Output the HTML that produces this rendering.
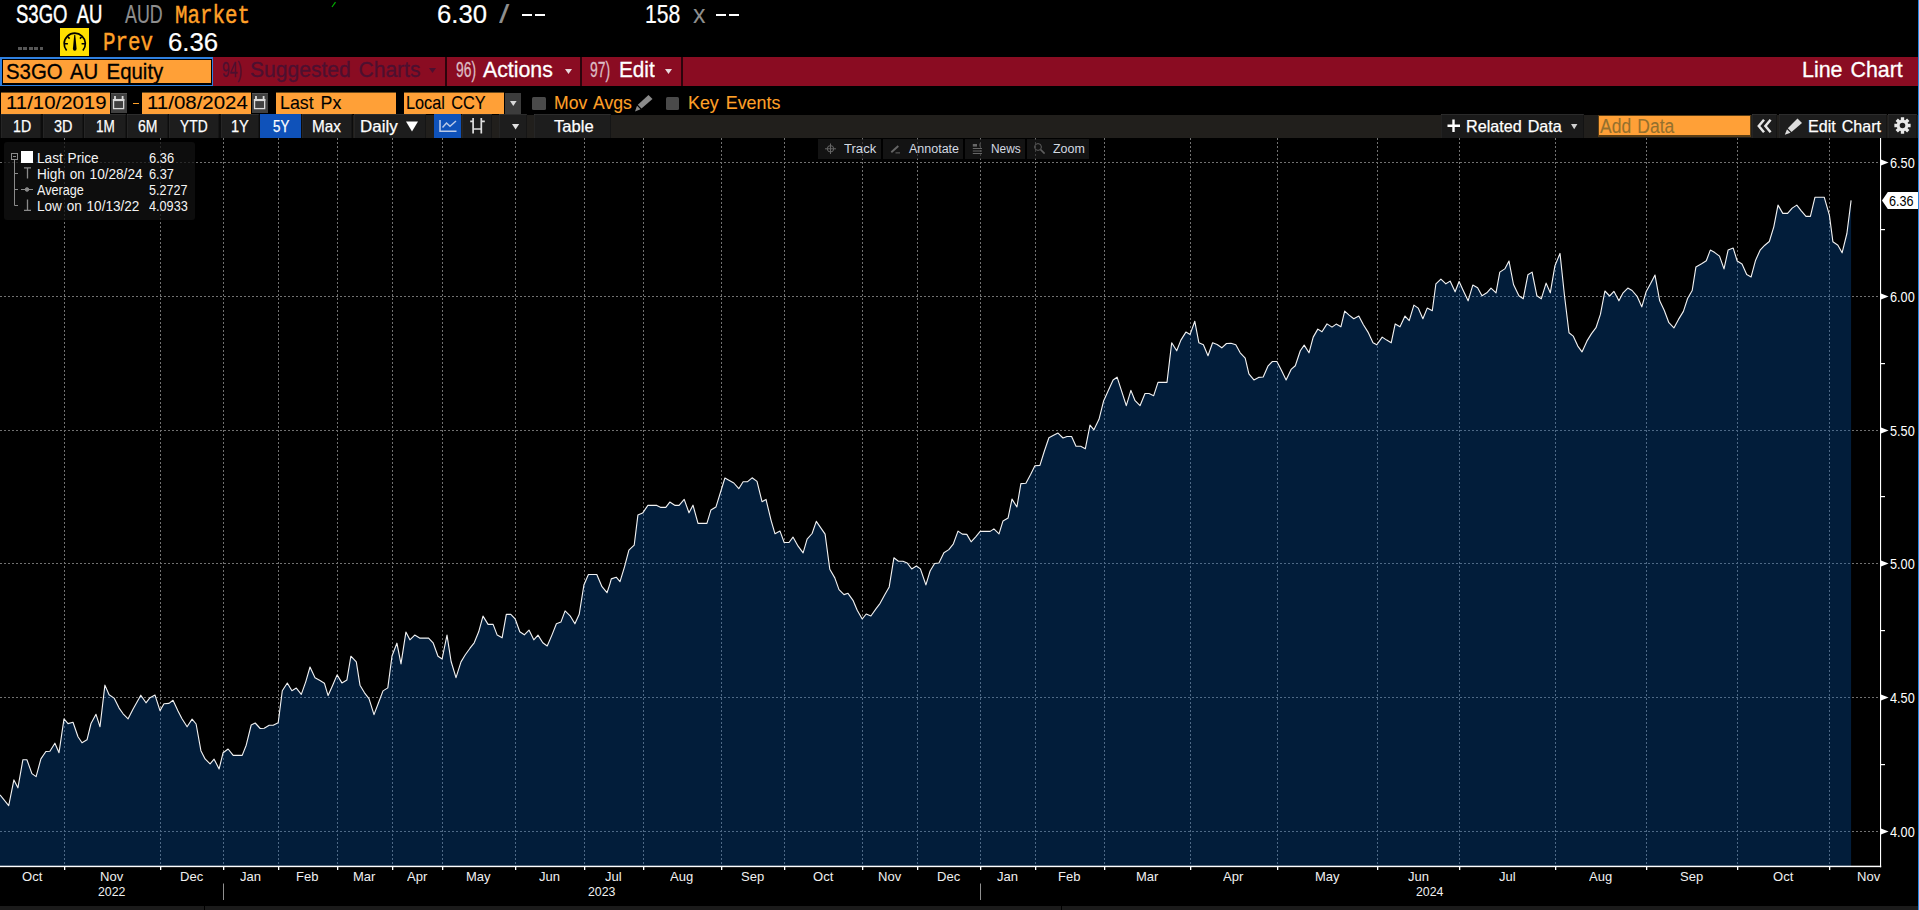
<!DOCTYPE html>
<html><head><meta charset="utf-8"><title>S3GO AU Equity - Line Chart</title>
<style>
html,body{margin:0;padding:0;background:#000;overflow:hidden;}
body{width:1919px;height:910px;position:relative;font-family:"Liberation Sans",sans-serif;}
.t{position:absolute;white-space:pre;line-height:1;transform-origin:0 0;display:block;}
.b{position:absolute;}
.s{position:absolute;overflow:visible;}
</style></head><body>
<span class="t" style="left:16.30px;top:2.04px;font-size:25px;color:#ffffff;-webkit-text-stroke:0.45px #ffffff;transform:scaleX(0.7400);word-spacing:7px;">S3GO AU</span>
<span class="t" style="left:124.70px;top:2.04px;font-size:25px;color:#8e8e8e;-webkit-text-stroke:0.2px #8e8e8e;transform:scaleX(0.7128);">AUD</span>
<span class="t" style="left:175.00px;top:2.89px;font-size:26.5px;color:#ffa028;-webkit-text-stroke:0.45px #ffa028;transform:scaleX(0.7864);font-family:'Liberation Mono',monospace;">Market</span>
<span class="t" style="left:436.50px;top:2.04px;font-size:25px;color:#ffffff;-webkit-text-stroke:0.2px #ffffff;transform:scaleX(1.0283);">6.30</span>
<span class="t" style="left:499.00px;top:2.04px;font-size:25px;color:#8e8e8e;transform:scaleX(1.4857);">/</span>
<div class="b" style="left:522px;top:14px;width:10px;height:2px;background:#ffffff;"></div>
<div class="b" style="left:535px;top:14px;width:10px;height:2px;background:#ffffff;"></div>
<span class="t" style="left:644.90px;top:2.04px;font-size:25px;color:#ffffff;-webkit-text-stroke:0.2px #ffffff;transform:scaleX(0.8479);">158</span>
<span class="t" style="left:692.90px;top:2.04px;font-size:25px;color:#8e8e8e;transform:scaleX(1.0000);">x</span>
<div class="b" style="left:716px;top:14px;width:10px;height:2px;background:#ffffff;"></div>
<div class="b" style="left:729px;top:14px;width:10px;height:2px;background:#ffffff;"></div>
<svg class="s" style="left:330px;top:1px" width="8" height="8"><path d="M2 6 L5.5 1.2" stroke="#00b000" stroke-width="1.2" fill="none"/></svg>
<div class="b" style="left:18.0px;top:46.6px;width:3.8999999999999986px;height:3.799999999999997px;background:#565656;"></div>
<div class="b" style="left:23.4px;top:46.6px;width:3.8999999999999986px;height:3.799999999999997px;background:#565656;"></div>
<div class="b" style="left:28.8px;top:46.6px;width:3.900000000000002px;height:3.799999999999997px;background:#565656;"></div>
<div class="b" style="left:34.2px;top:46.6px;width:3.8999999999999986px;height:3.799999999999997px;background:#565656;"></div>
<div class="b" style="left:39.6px;top:46.6px;width:3.8999999999999986px;height:3.799999999999997px;background:#565656;"></div>
<div class="b" style="left:60px;top:28px;width:29px;height:28px;background:#ffe000;"></div>
<svg class="s" style="left:60px;top:28px" width="29" height="28" viewBox="0 0 29 28">
<path d="M6.63 22.56 A10.6 10.6 0 1 1 22.87 22.56" fill="none" stroke="#000" stroke-width="1.7"/>
<path d="M12.9 20.8 Q12.9 22.7 14.75 22.7 Q16.6 22.7 16.6 20.8 L15.25 6.8 L14.25 6.8 Z" fill="#000"/>
<path d="M4.6 15.7 H7.9 M21.6 15.7 H24.9 M7.9 8.9 L9.6 10.6 M21.6 8.9 L19.9 10.6" stroke="#000" stroke-width="1.5" fill="none"/>
</svg>
<span class="t" style="left:103.40px;top:30.39px;font-size:26.5px;color:#ffa028;-webkit-text-stroke:0.45px #ffa028;transform:scaleX(0.7874);font-family:'Liberation Mono',monospace;">Prev</span>
<span class="t" style="left:167.90px;top:29.54px;font-size:25px;color:#ffffff;-webkit-text-stroke:0.2px #ffffff;transform:scaleX(1.0303);">6.36</span>
<div class="b" style="left:0px;top:57px;width:1918px;height:28.599999999999994px;background:#8a0c22;"></div>
<div class="b" style="left:0px;top:57px;width:213px;height:29px;background:#2f80e0;"></div>
<div class="b" style="left:1.5px;top:58.5px;width:210.0px;height:26.0px;background:#000;"></div>
<div class="b" style="left:2.5px;top:60px;width:208.0px;height:23px;background:#ffa037;"></div>
<span class="t" style="left:5.60px;top:60.55px;font-size:22.5px;color:#000;-webkit-text-stroke:0.3px #000;transform:scaleX(0.9060);word-spacing:3px;">S3GO AU Equity</span>
<span class="t" style="left:222.00px;top:59.38px;font-size:22px;color:#4d1030;-webkit-text-stroke:0.3px #4d1030;transform:scaleX(0.6299);">94)</span>
<span class="t" style="left:250.00px;top:59.38px;font-size:22px;color:#4d1030;-webkit-text-stroke:0.3px #4d1030;transform:scaleX(0.9572);word-spacing:2px;">Suggested Charts</span>
<svg class="s" style="left:429px;top:68px" width="8" height="6"><path d="M0 0 H7 L3.5 5 Z" fill="#4d1030"/></svg>
<div class="b" style="left:445px;top:57px;width:2px;height:29px;background:#2c040c;"></div>
<span class="t" style="left:455.70px;top:59.38px;font-size:22px;color:#dcbcc4;-webkit-text-stroke:0.3px #dcbcc4;transform:scaleX(0.6299);">96)</span>
<span class="t" style="left:483.30px;top:59.38px;font-size:22px;color:#ffffff;-webkit-text-stroke:0.3px #ffffff;transform:scaleX(0.9678);">Actions</span>
<svg class="s" style="left:564.5px;top:68.5px" width="8" height="6"><path d="M0 0 H7 L3.5 5 Z" fill="#e8d8dc"/></svg>
<div class="b" style="left:580px;top:57px;width:2px;height:29px;background:#2c040c;"></div>
<span class="t" style="left:590.20px;top:59.38px;font-size:22px;color:#dcbcc4;-webkit-text-stroke:0.3px #dcbcc4;transform:scaleX(0.6331);">97)</span>
<span class="t" style="left:618.50px;top:59.38px;font-size:22px;color:#ffffff;-webkit-text-stroke:0.3px #ffffff;transform:scaleX(0.9426);">Edit</span>
<svg class="s" style="left:664.5px;top:68.5px" width="8" height="6"><path d="M0 0 H7 L3.5 5 Z" fill="#e8d8dc"/></svg>
<div class="b" style="left:681px;top:57px;width:2px;height:29px;background:#2c040c;"></div>
<span class="t" style="left:1802.40px;top:59.38px;font-size:22px;color:#ffffff;-webkit-text-stroke:0.3px #ffffff;transform:scaleX(0.9739);word-spacing:2px;">Line Chart</span>
<div class="b" style="left:1px;top:92px;width:109px;height:1px;background:#6b4a1c;"></div>
<div class="b" style="left:1px;top:93px;width:109px;height:20.5px;background:#ffa037;"></div>
<span class="t" style="left:6.30px;top:94.14px;font-size:18.5px;color:#000;-webkit-text-stroke:0.1px #000;transform:scaleX(1.1014);">11/10/2019</span>
<div class="b" style="left:110.9px;top:93px;width:15.900000000000006px;height:20.200000000000003px;background:#404040;box-shadow:inset 0 1px 0 #555;"></div>
<svg class="s" style="left:110.9px;top:93px" width="16" height="21" viewBox="0 0 16 21">
<rect x="2.55" y="6.6" width="10.1" height="9.0" fill="none" stroke="#dadada" stroke-width="1.3"/>
<rect x="1.9" y="6" width="11.4" height="2.1" fill="#dadada"/>
<path d="M4 3 v3.4 M11.6 3 v3.4" stroke="#dadada" stroke-width="1.8"/></svg>
<div class="b" style="left:133px;top:102.8px;width:6.099999999999994px;height:1.5px;background:#ffa028;"></div>
<div class="b" style="left:141.5px;top:92px;width:109.19999999999999px;height:1px;background:#6b4a1c;"></div>
<div class="b" style="left:141.5px;top:93px;width:109.19999999999999px;height:20.5px;background:#ffa037;"></div>
<span class="t" style="left:147.00px;top:94.14px;font-size:18.5px;color:#000;-webkit-text-stroke:0.1px #000;transform:scaleX(1.1047);">11/08/2024</span>
<div class="b" style="left:252px;top:93px;width:15.899999999999977px;height:20.200000000000003px;background:#404040;box-shadow:inset 0 1px 0 #555;"></div>
<svg class="s" style="left:252px;top:93px" width="16" height="21" viewBox="0 0 16 21">
<rect x="2.55" y="6.6" width="10.1" height="9.0" fill="none" stroke="#dadada" stroke-width="1.3"/>
<rect x="1.9" y="6" width="11.4" height="2.1" fill="#dadada"/>
<path d="M4 3 v3.4 M11.6 3 v3.4" stroke="#dadada" stroke-width="1.8"/></svg>
<div class="b" style="left:275.7px;top:92px;width:120.5px;height:1px;background:#6b4a1c;"></div>
<div class="b" style="left:275.7px;top:93px;width:120.5px;height:20.5px;background:#ffa037;"></div>
<span class="t" style="left:280.10px;top:94.14px;font-size:18.5px;color:#000;-webkit-text-stroke:0.1px #000;transform:scaleX(0.9631);word-spacing:2px;">Last Px</span>
<div class="b" style="left:403.9px;top:92px;width:100.30000000000001px;height:1px;background:#6b4a1c;"></div>
<div class="b" style="left:403.9px;top:93px;width:100.30000000000001px;height:20.5px;background:#ffa037;"></div>
<span class="t" style="left:406.40px;top:94.14px;font-size:18.5px;color:#000;-webkit-text-stroke:0.1px #000;transform:scaleX(0.8797);word-spacing:2px;">Local CCY</span>
<div class="b" style="left:505.2px;top:93px;width:15.800000000000011px;height:20.5px;background:#3c3c3c;"></div>
<svg class="s" style="left:510px;top:101px" width="8" height="6"><path d="M0 0 H6.6 L3.3 5 Z" fill="#d8d8d8"/></svg>
<div class="b" style="left:532px;top:97px;width:13.5px;height:13px;background:#4a4a4a;border-radius:1.5px;"></div>
<span class="t" style="left:554.20px;top:94.14px;font-size:18.5px;color:#ffa028;-webkit-text-stroke:0.1px #ffa028;transform:scaleX(0.9502);word-spacing:2px;">Mov Avgs</span>
<svg class="s" style="left:634px;top:94px" width="20" height="19" viewBox="0 0 20 19">
<path d="M14.5 1 L18.5 5 L7.5 14.5 L3.8 10.8 Z" fill="#8a8a8a"/><path d="M3 11.8 L6.5 15.3 L1 17.5 Z" fill="#8a8a8a"/></svg>
<div class="b" style="left:666.4px;top:97px;width:13.100000000000023px;height:13px;background:#4a4a4a;border-radius:1.5px;"></div>
<span class="t" style="left:688.00px;top:94.14px;font-size:18.5px;color:#ffa028;-webkit-text-stroke:0.1px #ffa028;transform:scaleX(0.9663);word-spacing:2px;">Key Events</span>
<div class="b" style="left:0px;top:114.7px;width:1918px;height:23.10000000000001px;background:#211f1c;"></div>
<div class="b" style="left:0px;top:114.2px;width:353px;height:23.60000000000001px;background:#0c0c0c;"></div>
<div class="b" style="left:1px;top:114.2px;width:40.3px;height:23.60000000000001px;background:#1d1d1d;box-shadow:inset 0 1px 0 rgba(255,255,255,0.07), inset 1px 0 0 rgba(255,255,255,0.04), inset -1px 0 0 rgba(0,0,0,0.25);"></div>
<span class="t" style="left:12.50px;top:117.83px;font-size:16.5px;color:#ffffff;-webkit-text-stroke:0.25px #ffffff;transform:scaleX(0.8615);">1D</span>
<div class="b" style="left:42.6px;top:114.2px;width:40.1px;height:23.60000000000001px;background:#1d1d1d;box-shadow:inset 0 1px 0 rgba(255,255,255,0.07), inset 1px 0 0 rgba(255,255,255,0.04), inset -1px 0 0 rgba(0,0,0,0.25);"></div>
<span class="t" style="left:53.90px;top:117.83px;font-size:16.5px;color:#ffffff;-webkit-text-stroke:0.25px #ffffff;transform:scaleX(0.8757);">3D</span>
<div class="b" style="left:84px;top:114.2px;width:42px;height:23.60000000000001px;background:#1d1d1d;box-shadow:inset 0 1px 0 rgba(255,255,255,0.07), inset 1px 0 0 rgba(255,255,255,0.04), inset -1px 0 0 rgba(0,0,0,0.25);"></div>
<span class="t" style="left:96.20px;top:117.83px;font-size:16.5px;color:#ffffff;-webkit-text-stroke:0.25px #ffffff;transform:scaleX(0.8219);">1M</span>
<div class="b" style="left:127.2px;top:114.2px;width:40.8px;height:23.60000000000001px;background:#1d1d1d;box-shadow:inset 0 1px 0 rgba(255,255,255,0.07), inset 1px 0 0 rgba(255,255,255,0.04), inset -1px 0 0 rgba(0,0,0,0.25);"></div>
<span class="t" style="left:137.80px;top:117.83px;font-size:16.5px;color:#ffffff;-webkit-text-stroke:0.25px #ffffff;transform:scaleX(0.8481);">6M</span>
<div class="b" style="left:169px;top:114.2px;width:50px;height:23.60000000000001px;background:#1d1d1d;box-shadow:inset 0 1px 0 rgba(255,255,255,0.07), inset 1px 0 0 rgba(255,255,255,0.04), inset -1px 0 0 rgba(0,0,0,0.25);"></div>
<span class="t" style="left:180.40px;top:117.83px;font-size:16.5px;color:#ffffff;-webkit-text-stroke:0.25px #ffffff;transform:scaleX(0.8364);">YTD</span>
<div class="b" style="left:220.5px;top:114.2px;width:38.80000000000001px;height:23.60000000000001px;background:#1d1d1d;box-shadow:inset 0 1px 0 rgba(255,255,255,0.07), inset 1px 0 0 rgba(255,255,255,0.04), inset -1px 0 0 rgba(0,0,0,0.25);"></div>
<span class="t" style="left:231.00px;top:117.83px;font-size:16.5px;color:#ffffff;-webkit-text-stroke:0.25px #ffffff;transform:scaleX(0.8845);">1Y</span>
<div class="b" style="left:260.4px;top:114.2px;width:40.60000000000002px;height:23.60000000000001px;background:#0f52ba;"></div>
<span class="t" style="left:272.60px;top:117.83px;font-size:16.5px;color:#ffffff;-webkit-text-stroke:0.25px #ffffff;transform:scaleX(0.8099);">5Y</span>
<div class="b" style="left:302.2px;top:114.2px;width:49.80000000000001px;height:23.60000000000001px;background:#1d1d1d;box-shadow:inset 0 1px 0 rgba(255,255,255,0.07), inset 1px 0 0 rgba(255,255,255,0.04), inset -1px 0 0 rgba(0,0,0,0.25);"></div>
<span class="t" style="left:312.00px;top:117.83px;font-size:16.5px;color:#ffffff;-webkit-text-stroke:0.25px #ffffff;transform:scaleX(0.9285);">Max</span>
<div class="b" style="left:354px;top:114.2px;width:72px;height:23.60000000000001px;background:#1d1d1d;box-shadow:inset 0 1px 0 rgba(255,255,255,0.07), inset 1px 0 0 rgba(255,255,255,0.04), inset -1px 0 0 rgba(0,0,0,0.25);"></div>
<span class="t" style="left:360.30px;top:117.83px;font-size:16.5px;color:#ffffff;-webkit-text-stroke:0.25px #ffffff;transform:scaleX(1.0266);">Daily</span>
<svg class="s" style="left:406px;top:121px" width="13" height="11"><path d="M0 0.4 H12 L6 10.4 Z" fill="#fff"/></svg>
<div class="b" style="left:433.5px;top:114.2px;width:27.600000000000023px;height:23.60000000000001px;background:#0f52ba;"></div>
<svg class="s" style="left:433.5px;top:115px" width="28" height="23" viewBox="0 0 28 23">
<path d="M6 5 V16.2 H22.5" fill="none" stroke="#b9c9e8" stroke-width="1.6"/>
<path d="M8.5 12.5 L12.5 8 L16 11.3 L22 6" fill="none" stroke="#b9c9e8" stroke-width="1.5"/></svg>
<div class="b" style="left:462px;top:114.2px;width:30px;height:23.60000000000001px;background:#1d1d1d;box-shadow:inset 0 1px 0 rgba(255,255,255,0.07), inset 1px 0 0 rgba(255,255,255,0.04), inset -1px 0 0 rgba(0,0,0,0.25);"></div>
<svg class="s" style="left:462px;top:115px" width="30" height="23" viewBox="0 0 30 23">
<path d="M11.1 3 V18.4 M8.2 6.4 H11.1 M11.1 14 H15.2 M19.3 3 V18.4 M15.2 14 H19.3 M19.3 6.4 H22.8" fill="none" stroke="#e0e0e0" stroke-width="1.7"/></svg>
<div class="b" style="left:499px;top:114.2px;width:28px;height:23.60000000000001px;background:#1d1d1d;box-shadow:inset 0 1px 0 rgba(255,255,255,0.07), inset 1px 0 0 rgba(255,255,255,0.04), inset -1px 0 0 rgba(0,0,0,0.25);"></div>
<svg class="s" style="left:512px;top:124px" width="8" height="6"><path d="M0 0 H7.2 L3.6 5.4 Z" fill="#e0e0e0"/></svg>
<div class="b" style="left:533.7px;top:114.2px;width:77.59999999999991px;height:23.60000000000001px;background:#1d1d1d;box-shadow:inset 0 1px 0 rgba(255,255,255,0.07), inset 1px 0 0 rgba(255,255,255,0.04), inset -1px 0 0 rgba(0,0,0,0.25);"></div>
<span class="t" style="left:553.80px;top:117.83px;font-size:16.5px;color:#ffffff;-webkit-text-stroke:0.25px #ffffff;transform:scaleX(1.0051);">Table</span>
<div class="b" style="left:1440.6px;top:114.2px;width:143.5px;height:23.60000000000001px;background:#1a1a1a;box-shadow:inset 0 1px 0 rgba(255,255,255,0.07), inset 1px 0 0 rgba(255,255,255,0.04), inset -1px 0 0 rgba(0,0,0,0.25);"></div>
<svg class="s" style="left:1447px;top:119px" width="14" height="14"><path d="M6.5 0.5 V13 M0.5 6.7 H13" stroke="#fff" stroke-width="2.4" fill="none"/></svg>
<span class="t" style="left:1466.30px;top:117.93px;font-size:16.5px;color:#ffffff;-webkit-text-stroke:0.25px #ffffff;transform:scaleX(0.9798);word-spacing:1.5px;">Related Data</span>
<svg class="s" style="left:1570.5px;top:124.3px" width="8" height="6"><path d="M0 0 H6.4 L3.2 5.2 Z" fill="#d0d0d0"/></svg>
<div class="b" style="left:1597.5px;top:114.5px;width:153.5px;height:22.5px;background:#5a3d14;"></div>
<div class="b" style="left:1598.5px;top:115.8px;width:151.79999999999995px;height:19.700000000000003px;background:#ffa037;"></div>
<span class="t" style="left:1600.30px;top:115.67px;font-size:20px;color:#94702e;-webkit-text-stroke:0.1px #94702e;transform:scaleX(0.8742);word-spacing:1.5px;">Add Data</span>
<div class="b" style="left:1752px;top:114.2px;width:25px;height:23.60000000000001px;background:#1d1d1d;box-shadow:inset 0 1px 0 rgba(255,255,255,0.07), inset 1px 0 0 rgba(255,255,255,0.04), inset -1px 0 0 rgba(0,0,0,0.25);"></div>
<svg class="s" style="left:1757px;top:119px" width="16" height="15"><path d="M7 0.8 L1.8 7 L7 13.2 M13.6 0.8 L8.4 7 L13.6 13.2" stroke="#e6e6e6" stroke-width="2.5" fill="none"/></svg>
<div class="b" style="left:1778.6px;top:114.2px;width:108.40000000000009px;height:23.60000000000001px;background:#1d1d1d;box-shadow:inset 0 1px 0 rgba(255,255,255,0.07), inset 1px 0 0 rgba(255,255,255,0.04), inset -1px 0 0 rgba(0,0,0,0.25);"></div>
<svg class="s" style="left:1784px;top:116.5px" width="20" height="19" viewBox="0 0 20 19">
<path d="M13.5 1.5 L18 6 L7.5 15 L3.8 11.3 Z" fill="#dcdcdc"/><path d="M3 12.3 L6.5 15.8 L0.8 17.8 Z" fill="#dcdcdc"/></svg>
<span class="t" style="left:1808.00px;top:117.93px;font-size:16.5px;color:#ffffff;-webkit-text-stroke:0.25px #ffffff;transform:scaleX(0.9750);word-spacing:1.5px;">Edit Chart</span>
<div class="b" style="left:1888px;top:114.2px;width:29px;height:23.60000000000001px;background:#1d1d1d;box-shadow:inset 0 1px 0 rgba(255,255,255,0.07), inset 1px 0 0 rgba(255,255,255,0.04), inset -1px 0 0 rgba(0,0,0,0.25);"></div>
<svg class="s" style="left:1893.8px;top:117.3px" width="17" height="17" viewBox="0 0 17 17"><path d="M16.63 6.85 L16.63 10.15 L14.04 10.21 L13.63 11.21 L15.42 13.09 L13.09 15.42 L11.21 13.63 L10.21 14.04 L10.15 16.63 L6.85 16.63 L6.79 14.04 L5.79 13.63 L3.91 15.42 L1.58 13.09 L3.37 11.21 L2.96 10.21 L0.37 10.15 L0.37 6.85 L2.96 6.79 L3.37 5.79 L1.58 3.91 L3.91 1.58 L5.79 3.37 L6.79 2.96 L6.85 0.37 L10.15 0.37 L10.21 2.96 L11.21 3.37 L13.09 1.58 L15.42 3.91 L13.63 5.79 L14.04 6.79 Z M8.5 5.7 A2.8 2.8 0 1 0 8.5 11.3 A2.8 2.8 0 1 0 8.5 5.7 Z" fill="#e8e8e8" fill-rule="evenodd"/></svg>
<svg class="s" style="left:0;top:0" width="1919" height="910" viewBox="0 0 1919 910"><g stroke="#717171" stroke-width="1" stroke-dasharray="2 2" shape-rendering="crispEdges"><line x1="64.5" y1="138" x2="64.5" y2="866"/><line x1="160.5" y1="138" x2="160.5" y2="866"/><line x1="223.5" y1="138" x2="223.5" y2="866"/><line x1="278.5" y1="138" x2="278.5" y2="866"/><line x1="337.5" y1="138" x2="337.5" y2="866"/><line x1="392.5" y1="138" x2="392.5" y2="866"/><line x1="442.5" y1="138" x2="442.5" y2="866"/><line x1="515.5" y1="138" x2="515.5" y2="866"/><line x1="584.5" y1="138" x2="584.5" y2="866"/><line x1="643.5" y1="138" x2="643.5" y2="866"/><line x1="721.5" y1="138" x2="721.5" y2="866"/><line x1="784.5" y1="138" x2="784.5" y2="866"/><line x1="862.5" y1="138" x2="862.5" y2="866"/><line x1="917.5" y1="138" x2="917.5" y2="866"/><line x1="980.5" y1="138" x2="980.5" y2="866"/><line x1="1035.5" y1="138" x2="1035.5" y2="866"/><line x1="1104.5" y1="138" x2="1104.5" y2="866"/><line x1="1190.5" y1="138" x2="1190.5" y2="866"/><line x1="1277.5" y1="138" x2="1277.5" y2="866"/><line x1="1377.5" y1="138" x2="1377.5" y2="866"/><line x1="1459.5" y1="138" x2="1459.5" y2="866"/><line x1="1555.5" y1="138" x2="1555.5" y2="866"/><line x1="1646.5" y1="138" x2="1646.5" y2="866"/><line x1="1737.5" y1="138" x2="1737.5" y2="866"/><line x1="1829.5" y1="138" x2="1829.5" y2="866"/><line x1="0" y1="162.5" x2="1880" y2="162.5"/><line x1="0" y1="296.5" x2="1880" y2="296.5"/><line x1="0" y1="430.5" x2="1880" y2="430.5"/><line x1="0" y1="563.5" x2="1880" y2="563.5"/><line x1="0" y1="697.5" x2="1880" y2="697.5"/><line x1="0" y1="831.5" x2="1880" y2="831.5"/></g><polygon points="0,866 0.0,794.9 8.7,805.6 13.9,779.9 17.9,787.8 22.9,759.7 26.9,759.7 31.9,773.6 36.1,776.6 40.9,758.9 45.9,751.5 49.9,751.2 54.9,743.2 59.0,752.7 64.0,718.8 68.0,723.6 73.0,722.3 78.0,736.8 82.0,742.8 87.0,739.8 91.0,723.5 96.0,714.3 100.0,726.8 104.9,685.1 109.1,694.7 114.1,698.1 119.1,708.1 123.1,713.8 128.1,718.8 133.1,709.1 140.8,695.2 146.0,702.8 150.0,697.7 155.0,695.1 160.0,710.6 164.0,703.8 169.0,703.4 173.0,700.3 178.0,710.9 182.0,718.8 187.1,726.8 192.1,719.1 196.1,724.0 200.9,750.7 205.1,758.9 210.1,763.9 214.1,759.2 219.1,768.9 223.1,752.7 228.1,749.0 233.2,755.4 242.2,755.4 246.2,745.2 251.2,725.0 255.2,723.0 260.2,728.5 264.2,728.3 269.2,725.3 273.2,725.3 278.2,722.8 282.3,690.7 287.3,683.0 291.9,690.7 296.3,688.1 301.3,694.4 305.8,681.6 310.0,667.0 315.0,677.7 320.0,680.6 324.4,683.2 328.1,695.6 332.7,685.2 337.1,674.9 341.9,682.9 346.9,679.9 350.9,656.2 356.3,661.9 360.0,685.2 364.5,692.8 369.0,698.6 374.0,714.6 378.5,702.8 383.0,690.9 387.8,687.9 392.0,656.0 396.9,643.2 401.0,663.9 405.9,632.1 409.9,639.8 414.7,635.1 419.6,638.1 428.6,638.1 433.1,642.8 438.0,656.2 442.1,659.0 447.0,635.1 451.1,661.5 456.0,677.7 461.0,661.9 465.3,654.8 470.0,648.2 474.2,642.8 478.7,631.8 483.0,616.1 488.1,624.4 493.1,624.4 497.2,635.1 502.1,637.8 506.3,614.4 510.8,614.4 515.1,618.8 519.8,631.8 524.3,634.8 529.0,630.1 533.8,639.8 538.0,635.1 542.8,642.8 547.2,646.0 551.9,635.1 556.4,623.8 560.9,622.1 565.1,610.9 570.1,615.8 574.9,623.8 579.2,614.3 583.9,585.0 588.4,574.5 596.8,574.5 602.0,586.7 607.0,592.7 610.0,583.6 611.3,578.9 616.2,577.2 620.0,581.6 624.5,566.9 628.9,550.2 634.2,545.2 637.9,515.1 642.6,513.1 647.9,505.4 656.8,505.4 660.9,507.4 665.8,507.4 669.8,502.1 675.1,505.4 679.1,505.4 684.2,499.4 689.0,512.8 693.0,505.2 698.0,523.4 706.9,523.4 710.9,510.1 715.9,507.1 724.9,478.0 733.8,483.0 738.8,488.7 743.1,481.7 747.6,481.7 752.1,477.8 757.0,481.4 762.0,501.7 766.0,499.4 771.0,520.1 775.0,533.8 780.0,531.1 784.2,542.5 789.0,542.5 793.0,537.1 798.1,546.2 803.1,552.8 807.1,539.1 812.1,533.5 816.3,521.4 825.1,534.1 829.8,569.2 834.8,577.9 839.0,589.6 844.0,594.6 848.0,593.3 853.0,600.3 857.2,610.3 862.2,619.0 866.2,614.0 870.9,616.0 876.1,608.6 880.1,603.3 884.9,594.6 889.2,586.9 893.9,557.8 898.4,561.2 902.9,561.2 907.2,563.0 911.7,568.9 916.4,566.0 920.4,568.9 925.9,584.9 930.1,571.0 934.6,563.5 938.9,563.0 943.9,552.8 948.8,549.6 953.4,543.8 958.0,531.1 962.3,534.1 966.8,534.4 971.1,541.8 975.7,536.8 980.2,531.4 990.2,531.4 993.9,528.9 999.0,533.8 1003.0,520.9 1008.1,517.9 1012.0,499.1 1016.9,507.0 1020.9,483.6 1025.9,483.2 1030.6,474.4 1034.9,465.7 1039.9,465.4 1044.4,451.0 1048.9,437.8 1053.1,435.6 1058.0,433.1 1063.0,438.0 1067.0,436.5 1071.6,436.5 1076.0,446.3 1080.7,446.3 1085.3,448.8 1090.0,425.1 1093.9,429.8 1099.0,419.3 1103.7,400.7 1108.1,390.9 1113.1,380.0 1117.1,377.2 1122.1,392.7 1126.3,405.7 1130.9,390.4 1135.1,400.7 1140.0,405.7 1145.0,393.5 1149.0,393.5 1153.7,395.7 1158.0,382.4 1167.0,382.4 1171.7,342.8 1176.7,350.8 1180.9,340.1 1185.9,332.1 1190.1,334.4 1194.8,321.3 1198.9,342.8 1203.4,344.8 1208.0,355.7 1212.6,342.8 1217.1,344.5 1221.8,347.8 1226.5,343.5 1231.0,343.3 1235.8,344.8 1240.2,352.8 1245.2,358.2 1248.9,373.9 1253.9,379.9 1258.6,377.4 1263.2,377.0 1267.9,366.2 1272.4,361.5 1276.9,361.5 1281.4,370.2 1286.1,379.9 1291.1,369.4 1295.3,365.8 1300.3,350.8 1304.2,345.1 1309.0,352.8 1313.2,337.1 1317.8,329.1 1322.0,331.8 1327.0,323.9 1332.0,327.1 1336.2,324.1 1340.9,326.8 1344.7,311.1 1349.1,315.1 1353.8,318.7 1358.8,316.1 1363.4,324.8 1368.0,332.1 1373.0,342.8 1376.8,344.8 1382.2,337.1 1386.7,340.1 1391.2,342.8 1395.2,323.9 1400.0,326.8 1405.0,316.1 1409.2,320.6 1413.9,305.1 1418.2,308.1 1422.9,318.7 1427.2,308.1 1432.3,310.7 1435.9,283.8 1440.9,279.1 1445.9,283.8 1450.1,281.1 1455.1,291.8 1459.1,281.5 1463.8,291.8 1468.1,300.8 1472.8,285.1 1477.6,287.8 1482.0,295.8 1486.8,292.8 1491.0,288.1 1496.0,292.8 1499.8,272.1 1504.8,268.9 1509.0,261.1 1513.5,284.5 1518.9,295.8 1523.2,298.8 1527.9,274.8 1532.1,272.1 1536.9,295.8 1541.3,298.8 1546.1,283.1 1550.3,292.8 1554.9,265.9 1560.0,253.4 1564.5,295.8 1569.0,332.7 1573.2,336.1 1577.8,346.1 1582.0,351.9 1587.0,340.9 1591.5,333.6 1596.0,327.7 1600.4,314.4 1604.9,291.0 1609.6,296.0 1613.9,291.3 1618.9,300.8 1623.1,292.8 1627.8,288.1 1632.1,290.5 1637.1,296.3 1641.8,306.8 1646.1,291.8 1650.5,283.8 1655.0,275.1 1659.7,300.8 1664.2,310.2 1668.9,322.7 1673.9,327.9 1678.5,319.4 1683.4,311.4 1687.6,298.5 1692.2,290.5 1695.9,267.1 1701.6,263.8 1706.3,260.8 1710.3,250.1 1714.8,252.6 1719.5,256.1 1724.0,268.9 1728.1,250.1 1733.2,248.1 1737.2,261.0 1742.0,264.0 1746.7,274.6 1751.1,276.9 1755.6,260.2 1760.1,250.2 1764.8,245.2 1769.3,241.5 1773.8,226.8 1778.0,205.1 1782.8,213.4 1787.6,213.4 1792.2,208.1 1796.8,205.1 1801.3,210.8 1806.0,216.4 1810.4,216.4 1815.0,197.2 1824.2,197.2 1829.4,215.1 1832.9,241.8 1837.9,245.2 1842.1,252.8 1846.9,233.5 1851.1,200.4 1851.1,866" fill="rgba(6,90,181,0.32)"/><polyline points="0.0,794.9 8.7,805.6 13.9,779.9 17.9,787.8 22.9,759.7 26.9,759.7 31.9,773.6 36.1,776.6 40.9,758.9 45.9,751.5 49.9,751.2 54.9,743.2 59.0,752.7 64.0,718.8 68.0,723.6 73.0,722.3 78.0,736.8 82.0,742.8 87.0,739.8 91.0,723.5 96.0,714.3 100.0,726.8 104.9,685.1 109.1,694.7 114.1,698.1 119.1,708.1 123.1,713.8 128.1,718.8 133.1,709.1 140.8,695.2 146.0,702.8 150.0,697.7 155.0,695.1 160.0,710.6 164.0,703.8 169.0,703.4 173.0,700.3 178.0,710.9 182.0,718.8 187.1,726.8 192.1,719.1 196.1,724.0 200.9,750.7 205.1,758.9 210.1,763.9 214.1,759.2 219.1,768.9 223.1,752.7 228.1,749.0 233.2,755.4 242.2,755.4 246.2,745.2 251.2,725.0 255.2,723.0 260.2,728.5 264.2,728.3 269.2,725.3 273.2,725.3 278.2,722.8 282.3,690.7 287.3,683.0 291.9,690.7 296.3,688.1 301.3,694.4 305.8,681.6 310.0,667.0 315.0,677.7 320.0,680.6 324.4,683.2 328.1,695.6 332.7,685.2 337.1,674.9 341.9,682.9 346.9,679.9 350.9,656.2 356.3,661.9 360.0,685.2 364.5,692.8 369.0,698.6 374.0,714.6 378.5,702.8 383.0,690.9 387.8,687.9 392.0,656.0 396.9,643.2 401.0,663.9 405.9,632.1 409.9,639.8 414.7,635.1 419.6,638.1 428.6,638.1 433.1,642.8 438.0,656.2 442.1,659.0 447.0,635.1 451.1,661.5 456.0,677.7 461.0,661.9 465.3,654.8 470.0,648.2 474.2,642.8 478.7,631.8 483.0,616.1 488.1,624.4 493.1,624.4 497.2,635.1 502.1,637.8 506.3,614.4 510.8,614.4 515.1,618.8 519.8,631.8 524.3,634.8 529.0,630.1 533.8,639.8 538.0,635.1 542.8,642.8 547.2,646.0 551.9,635.1 556.4,623.8 560.9,622.1 565.1,610.9 570.1,615.8 574.9,623.8 579.2,614.3 583.9,585.0 588.4,574.5 596.8,574.5 602.0,586.7 607.0,592.7 610.0,583.6 611.3,578.9 616.2,577.2 620.0,581.6 624.5,566.9 628.9,550.2 634.2,545.2 637.9,515.1 642.6,513.1 647.9,505.4 656.8,505.4 660.9,507.4 665.8,507.4 669.8,502.1 675.1,505.4 679.1,505.4 684.2,499.4 689.0,512.8 693.0,505.2 698.0,523.4 706.9,523.4 710.9,510.1 715.9,507.1 724.9,478.0 733.8,483.0 738.8,488.7 743.1,481.7 747.6,481.7 752.1,477.8 757.0,481.4 762.0,501.7 766.0,499.4 771.0,520.1 775.0,533.8 780.0,531.1 784.2,542.5 789.0,542.5 793.0,537.1 798.1,546.2 803.1,552.8 807.1,539.1 812.1,533.5 816.3,521.4 825.1,534.1 829.8,569.2 834.8,577.9 839.0,589.6 844.0,594.6 848.0,593.3 853.0,600.3 857.2,610.3 862.2,619.0 866.2,614.0 870.9,616.0 876.1,608.6 880.1,603.3 884.9,594.6 889.2,586.9 893.9,557.8 898.4,561.2 902.9,561.2 907.2,563.0 911.7,568.9 916.4,566.0 920.4,568.9 925.9,584.9 930.1,571.0 934.6,563.5 938.9,563.0 943.9,552.8 948.8,549.6 953.4,543.8 958.0,531.1 962.3,534.1 966.8,534.4 971.1,541.8 975.7,536.8 980.2,531.4 990.2,531.4 993.9,528.9 999.0,533.8 1003.0,520.9 1008.1,517.9 1012.0,499.1 1016.9,507.0 1020.9,483.6 1025.9,483.2 1030.6,474.4 1034.9,465.7 1039.9,465.4 1044.4,451.0 1048.9,437.8 1053.1,435.6 1058.0,433.1 1063.0,438.0 1067.0,436.5 1071.6,436.5 1076.0,446.3 1080.7,446.3 1085.3,448.8 1090.0,425.1 1093.9,429.8 1099.0,419.3 1103.7,400.7 1108.1,390.9 1113.1,380.0 1117.1,377.2 1122.1,392.7 1126.3,405.7 1130.9,390.4 1135.1,400.7 1140.0,405.7 1145.0,393.5 1149.0,393.5 1153.7,395.7 1158.0,382.4 1167.0,382.4 1171.7,342.8 1176.7,350.8 1180.9,340.1 1185.9,332.1 1190.1,334.4 1194.8,321.3 1198.9,342.8 1203.4,344.8 1208.0,355.7 1212.6,342.8 1217.1,344.5 1221.8,347.8 1226.5,343.5 1231.0,343.3 1235.8,344.8 1240.2,352.8 1245.2,358.2 1248.9,373.9 1253.9,379.9 1258.6,377.4 1263.2,377.0 1267.9,366.2 1272.4,361.5 1276.9,361.5 1281.4,370.2 1286.1,379.9 1291.1,369.4 1295.3,365.8 1300.3,350.8 1304.2,345.1 1309.0,352.8 1313.2,337.1 1317.8,329.1 1322.0,331.8 1327.0,323.9 1332.0,327.1 1336.2,324.1 1340.9,326.8 1344.7,311.1 1349.1,315.1 1353.8,318.7 1358.8,316.1 1363.4,324.8 1368.0,332.1 1373.0,342.8 1376.8,344.8 1382.2,337.1 1386.7,340.1 1391.2,342.8 1395.2,323.9 1400.0,326.8 1405.0,316.1 1409.2,320.6 1413.9,305.1 1418.2,308.1 1422.9,318.7 1427.2,308.1 1432.3,310.7 1435.9,283.8 1440.9,279.1 1445.9,283.8 1450.1,281.1 1455.1,291.8 1459.1,281.5 1463.8,291.8 1468.1,300.8 1472.8,285.1 1477.6,287.8 1482.0,295.8 1486.8,292.8 1491.0,288.1 1496.0,292.8 1499.8,272.1 1504.8,268.9 1509.0,261.1 1513.5,284.5 1518.9,295.8 1523.2,298.8 1527.9,274.8 1532.1,272.1 1536.9,295.8 1541.3,298.8 1546.1,283.1 1550.3,292.8 1554.9,265.9 1560.0,253.4 1564.5,295.8 1569.0,332.7 1573.2,336.1 1577.8,346.1 1582.0,351.9 1587.0,340.9 1591.5,333.6 1596.0,327.7 1600.4,314.4 1604.9,291.0 1609.6,296.0 1613.9,291.3 1618.9,300.8 1623.1,292.8 1627.8,288.1 1632.1,290.5 1637.1,296.3 1641.8,306.8 1646.1,291.8 1650.5,283.8 1655.0,275.1 1659.7,300.8 1664.2,310.2 1668.9,322.7 1673.9,327.9 1678.5,319.4 1683.4,311.4 1687.6,298.5 1692.2,290.5 1695.9,267.1 1701.6,263.8 1706.3,260.8 1710.3,250.1 1714.8,252.6 1719.5,256.1 1724.0,268.9 1728.1,250.1 1733.2,248.1 1737.2,261.0 1742.0,264.0 1746.7,274.6 1751.1,276.9 1755.6,260.2 1760.1,250.2 1764.8,245.2 1769.3,241.5 1773.8,226.8 1778.0,205.1 1782.8,213.4 1787.6,213.4 1792.2,208.1 1796.8,205.1 1801.3,210.8 1806.0,216.4 1810.4,216.4 1815.0,197.2 1824.2,197.2 1829.4,215.1 1832.9,241.8 1837.9,245.2 1842.1,252.8 1846.9,233.5 1851.1,200.4" fill="none" stroke="#f2f2f2" stroke-width="1.12" stroke-linejoin="round"/><rect x="0" y="865.7" width="1881.2" height="1.45" fill="#fff"/><rect x="1880" y="138" width="1.1" height="729.3" fill="#fff"/><rect x="64" y="866" width="1.3" height="4" fill="#fff"/><rect x="160" y="866" width="1.3" height="4" fill="#fff"/><rect x="223" y="866" width="1.3" height="4" fill="#fff"/><rect x="278" y="866" width="1.3" height="4" fill="#fff"/><rect x="337" y="866" width="1.3" height="4" fill="#fff"/><rect x="392" y="866" width="1.3" height="4" fill="#fff"/><rect x="442" y="866" width="1.3" height="4" fill="#fff"/><rect x="515" y="866" width="1.3" height="4" fill="#fff"/><rect x="584" y="866" width="1.3" height="4" fill="#fff"/><rect x="643" y="866" width="1.3" height="4" fill="#fff"/><rect x="721" y="866" width="1.3" height="4" fill="#fff"/><rect x="784" y="866" width="1.3" height="4" fill="#fff"/><rect x="862" y="866" width="1.3" height="4" fill="#fff"/><rect x="917" y="866" width="1.3" height="4" fill="#fff"/><rect x="980" y="866" width="1.3" height="4" fill="#fff"/><rect x="1035" y="866" width="1.3" height="4" fill="#fff"/><rect x="1104" y="866" width="1.3" height="4" fill="#fff"/><rect x="1190" y="866" width="1.3" height="4" fill="#fff"/><rect x="1277" y="866" width="1.3" height="4" fill="#fff"/><rect x="1377" y="866" width="1.3" height="4" fill="#fff"/><rect x="1459" y="866" width="1.3" height="4" fill="#fff"/><rect x="1555" y="866" width="1.3" height="4" fill="#fff"/><rect x="1646" y="866" width="1.3" height="4" fill="#fff"/><rect x="1737" y="866" width="1.3" height="4" fill="#fff"/><rect x="1829" y="866" width="1.3" height="4" fill="#fff"/><path d="M1881 159.6 L1888.6 162.5 L1881 165.4 Z" fill="#fff"/><path d="M1881 293.6 L1888.6 296.5 L1881 299.4 Z" fill="#fff"/><path d="M1881 427.6 L1888.6 430.5 L1881 433.4 Z" fill="#fff"/><path d="M1881 560.6 L1888.6 563.5 L1881 566.4 Z" fill="#fff"/><path d="M1881 694.6 L1888.6 697.5 L1881 700.4 Z" fill="#fff"/><path d="M1881 828.6 L1888.6 831.5 L1881 834.4 Z" fill="#fff"/><rect x="1881" y="229" width="4" height="1.2" fill="#fff"/><rect x="1881" y="363" width="4" height="1.2" fill="#fff"/><rect x="1881" y="496" width="4" height="1.2" fill="#fff"/><rect x="1881" y="630" width="4" height="1.2" fill="#fff"/><rect x="1881" y="764" width="4" height="1.2" fill="#fff"/><path d="M1882 200.4 L1887.8 191.9 H1918 V208.9 H1887.8 Z" fill="#fff"/><rect x="223" y="883.5" width="1" height="16.5" fill="#909090"/><rect x="980" y="883.5" width="1" height="16.5" fill="#909090"/></svg>
<span class="t" style="left:1890.20px;top:156.25px;font-size:14px;color:#ffffff;transform:scaleX(0.9064);">6.50</span>
<span class="t" style="left:1890.20px;top:290.25px;font-size:14px;color:#ffffff;transform:scaleX(0.9064);">6.00</span>
<span class="t" style="left:1890.20px;top:424.25px;font-size:14px;color:#ffffff;transform:scaleX(0.9064);">5.50</span>
<span class="t" style="left:1890.20px;top:557.25px;font-size:14px;color:#ffffff;transform:scaleX(0.9064);">5.00</span>
<span class="t" style="left:1890.20px;top:691.25px;font-size:14px;color:#ffffff;transform:scaleX(0.9064);">4.50</span>
<span class="t" style="left:1890.20px;top:825.25px;font-size:14px;color:#ffffff;transform:scaleX(0.9064);">4.00</span>
<span class="t" style="left:1889.20px;top:194.05px;font-size:14px;color:#000;transform:scaleX(0.9028);">6.36</span>
<span class="t" style="left:21.88px;top:869.57px;font-size:13.5px;color:#f0f0f0;transform:scaleX(0.9643);">Oct</span>
<span class="t" style="left:100.44px;top:869.57px;font-size:13.5px;color:#f0f0f0;transform:scaleX(0.9635);">Nov</span>
<span class="t" style="left:179.94px;top:869.57px;font-size:13.5px;color:#f0f0f0;transform:scaleX(0.9635);">Dec</span>
<span class="t" style="left:240.00px;top:869.57px;font-size:13.5px;color:#f0f0f0;transform:scaleX(0.9655);">Jan</span>
<span class="t" style="left:296.31px;top:869.57px;font-size:13.5px;color:#f0f0f0;transform:scaleX(0.9624);">Feb</span>
<span class="t" style="left:353.31px;top:869.57px;font-size:13.5px;color:#f0f0f0;transform:scaleX(0.9624);">Mar</span>
<span class="t" style="left:406.88px;top:869.57px;font-size:13.5px;color:#f0f0f0;transform:scaleX(0.9643);">Apr</span>
<span class="t" style="left:466.25px;top:869.57px;font-size:13.5px;color:#f0f0f0;transform:scaleX(0.9608);">May</span>
<span class="t" style="left:539.00px;top:869.57px;font-size:13.5px;color:#f0f0f0;transform:scaleX(0.9655);">Jun</span>
<span class="t" style="left:605.19px;top:869.57px;font-size:13.5px;color:#f0f0f0;transform:scaleX(0.9638);">Jul</span>
<span class="t" style="left:670.44px;top:869.57px;font-size:13.5px;color:#f0f0f0;transform:scaleX(0.9635);">Aug</span>
<span class="t" style="left:740.94px;top:869.57px;font-size:13.5px;color:#f0f0f0;transform:scaleX(0.9635);">Sep</span>
<span class="t" style="left:812.88px;top:869.57px;font-size:13.5px;color:#f0f0f0;transform:scaleX(0.9643);">Oct</span>
<span class="t" style="left:877.94px;top:869.57px;font-size:13.5px;color:#f0f0f0;transform:scaleX(0.9635);">Nov</span>
<span class="t" style="left:936.94px;top:869.57px;font-size:13.5px;color:#f0f0f0;transform:scaleX(0.9635);">Dec</span>
<span class="t" style="left:997.00px;top:869.57px;font-size:13.5px;color:#f0f0f0;transform:scaleX(0.9655);">Jan</span>
<span class="t" style="left:1058.31px;top:869.57px;font-size:13.5px;color:#f0f0f0;transform:scaleX(0.9624);">Feb</span>
<span class="t" style="left:1135.81px;top:869.57px;font-size:13.5px;color:#f0f0f0;transform:scaleX(0.9624);">Mar</span>
<span class="t" style="left:1223.38px;top:869.57px;font-size:13.5px;color:#f0f0f0;transform:scaleX(0.9643);">Apr</span>
<span class="t" style="left:1314.75px;top:869.57px;font-size:13.5px;color:#f0f0f0;transform:scaleX(0.9608);">May</span>
<span class="t" style="left:1407.50px;top:869.57px;font-size:13.5px;color:#f0f0f0;transform:scaleX(0.9655);">Jun</span>
<span class="t" style="left:1498.69px;top:869.57px;font-size:13.5px;color:#f0f0f0;transform:scaleX(0.9638);">Jul</span>
<span class="t" style="left:1588.94px;top:869.57px;font-size:13.5px;color:#f0f0f0;transform:scaleX(0.9635);">Aug</span>
<span class="t" style="left:1679.94px;top:869.57px;font-size:13.5px;color:#f0f0f0;transform:scaleX(0.9635);">Sep</span>
<span class="t" style="left:1772.88px;top:869.57px;font-size:13.5px;color:#f0f0f0;transform:scaleX(0.9643);">Oct</span>
<span class="t" style="left:1857.44px;top:869.57px;font-size:13.5px;color:#f0f0f0;transform:scaleX(0.9635);">Nov</span>
<span class="t" style="left:97.80px;top:885.47px;font-size:13.5px;color:#f0f0f0;transform:scaleX(0.9133);">2022</span>
<span class="t" style="left:587.80px;top:885.47px;font-size:13.5px;color:#f0f0f0;transform:scaleX(0.9133);">2023</span>
<span class="t" style="left:1416.30px;top:885.47px;font-size:13.5px;color:#f0f0f0;transform:scaleX(0.9133);">2024</span>
<div class="b" style="left:0px;top:906px;width:1919px;height:4px;background:#1b1b1b;"></div>
<div class="b" style="left:204px;top:906px;width:1px;height:4px;background:#000;"></div>
<div class="b" style="left:1061px;top:906px;width:1px;height:4px;background:#000;"></div>
<div class="b" style="left:1918px;top:0px;width:1px;height:910px;background:#2789e2;"></div>
<div class="b" style="left:4.4px;top:142.3px;width:190.4px;height:77.29999999999998px;background:rgba(18,18,18,0.74);border-radius:3px;"></div>
<div class="b" style="left:21px;top:151px;width:12.200000000000003px;height:11.800000000000011px;background:#fff;"></div>
<svg class="s" style="left:0;top:140px" width="60" height="80" viewBox="0 0 60 80">
<g fill="none" stroke="#8a8a8a" stroke-width="1">
<rect x="11.5" y="13.5" width="6" height="6"/><path d="M13 16.5 h3"/>
<path d="M14.5 20 V65.5 H18 M14.5 33.5 H18 M14.5 49.5 H18"/>
<path d="M24 27.8 H31 M27.5 27.8 V38.5" stroke-width="1.3"/>
<path d="M21 49.5 H33" /><circle cx="27" cy="49.5" r="1.8" fill="#8a8a8a"/>
<path d="M27.5 59.5 V70 M24 70.3 H31" stroke-width="1.3"/>
</g></svg>
<span class="t" style="left:37.30px;top:150.85px;font-size:14px;color:#f4f4f4;transform:scaleX(0.9755);word-spacing:1px;">Last Price</span>
<span class="t" style="left:148.80px;top:150.85px;font-size:14px;color:#f4f4f4;transform:scaleX(0.9211);word-spacing:1px;">6.36</span>
<span class="t" style="left:37.30px;top:166.95px;font-size:14px;color:#f4f4f4;transform:scaleX(0.9712);word-spacing:1px;">High on 10/28/24</span>
<span class="t" style="left:148.80px;top:166.95px;font-size:14px;color:#f4f4f4;transform:scaleX(0.9138);word-spacing:1px;">6.37</span>
<span class="t" style="left:37.30px;top:182.65px;font-size:14px;color:#f4f4f4;transform:scaleX(0.9002);word-spacing:1px;">Average</span>
<span class="t" style="left:148.80px;top:182.65px;font-size:14px;color:#f4f4f4;transform:scaleX(0.8980);word-spacing:1px;">5.2727</span>
<span class="t" style="left:37.30px;top:198.95px;font-size:14px;color:#f4f4f4;transform:scaleX(0.9706);word-spacing:1px;">Low on 10/13/22</span>
<span class="t" style="left:148.80px;top:198.95px;font-size:14px;color:#f4f4f4;transform:scaleX(0.9050);word-spacing:1px;">4.0933</span>
<div class="b" style="left:818.4px;top:139.4px;width:62.5px;height:19.400000000000006px;background:rgba(30,30,30,0.62);"></div>
<div class="b" style="left:883px;top:139.4px;width:80.20000000000005px;height:19.400000000000006px;background:rgba(30,30,30,0.62);"></div>
<div class="b" style="left:965.3px;top:139.4px;width:59.40000000000009px;height:19.400000000000006px;background:rgba(30,30,30,0.62);"></div>
<div class="b" style="left:1027.2px;top:139.4px;width:61.700000000000045px;height:19.400000000000006px;background:rgba(30,30,30,0.62);"></div>
<span class="t" style="left:844.40px;top:143.12px;font-size:12.5px;color:#d4dae2;transform:scaleX(1.0462);">Track</span>
<span class="t" style="left:909.00px;top:143.12px;font-size:12.5px;color:#d4dae2;transform:scaleX(1.0000);">Annotate</span>
<span class="t" style="left:991.40px;top:143.12px;font-size:12.5px;color:#d4dae2;transform:scaleX(0.9472);">News</span>
<span class="t" style="left:1052.90px;top:143.12px;font-size:12.5px;color:#d4dae2;transform:scaleX(0.9969);">Zoom</span>
<svg class="s" style="left:824px;top:143px" width="14" height="12" viewBox="0 0 14 12"><g fill="none" stroke="#666" stroke-width="1"><circle cx="6.5" cy="5.8" r="3.2"/><path d="M6.5 0.5 V11 M1 5.8 H12"/></g></svg>
<svg class="s" style="left:890px;top:143px" width="12" height="12" viewBox="0 0 12 12"><g fill="none" stroke="#666" stroke-width="1.3"><path d="M1.3 9.3 L8.3 3" stroke-width="1.9"/><path d="M5.5 9.9 H10" stroke-width="1"/></g></svg>
<svg class="s" style="left:972px;top:143px" width="12" height="12" viewBox="0 0 12 12"><g fill="none" stroke="#666" stroke-width="1"><rect x="0.8" y="1" width="4.2" height="2.6" fill="#666" stroke="none"/><path d="M0.8 5.5 H10 M0.8 8 H10 M0.8 10.5 H10"/><path d="M8 0.5 V3.6"/></g></svg>
<svg class="s" style="left:1033px;top:142px" width="14" height="14" viewBox="0 0 14 14"><g fill="none" stroke="#5e5e5e" stroke-width="1"><circle cx="5" cy="5" r="3.4"/><path d="M7.6 7.6 L11.6 11.6" stroke-width="1.6"/></g></svg>
</body></html>
